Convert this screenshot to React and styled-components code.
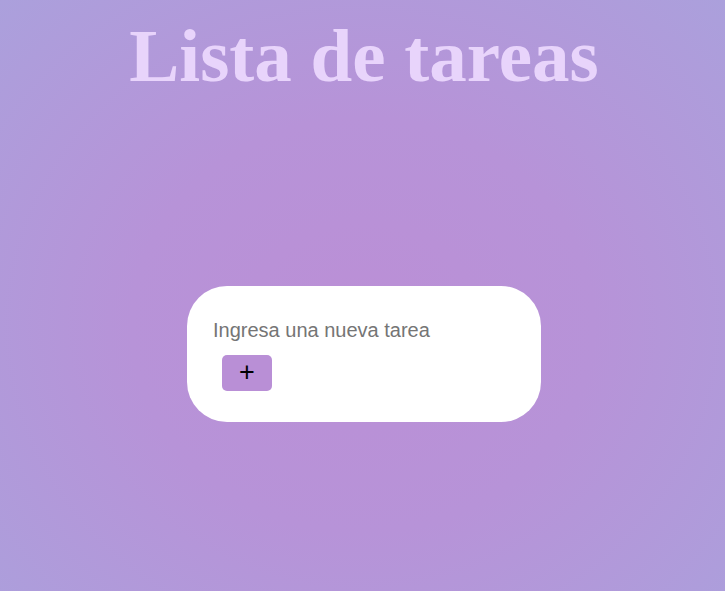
import React, { useState } from 'react'
import styled, { createGlobalStyle } from 'styled-components'

const GlobalStyle = createGlobalStyle`
  html, body {
    margin: 0;
    padding: 0;
    height: 100%;
  }
  body {
    font-family: "Liberation Sans", Arial, sans-serif;
  }
  #root {
    min-height: 100%;
  }
`

const Page = styled.div`
  min-height: 100vh;
  box-sizing: border-box;
  padding-left: 3px;
  display: flex;
  flex-direction: column;
  align-items: center;
  background: radial-gradient(ellipse at 50% 55%, #bb8fd6 0%, #b793d8 45%, #aba0dc 100%);
`

const Title = styled.h1`
  margin: 0;
  padding: 18px 0 21px;
  font-family: "Liberation Serif", "Times New Roman", serif;
  font-weight: 700;
  font-size: 75px;
  line-height: 1;
  color: #e8d4fb;
  text-align: center;
`

const Main = styled.main`
  flex: 1;
  padding-top: 2px;
  display: flex;
  align-items: center;
  justify-content: center;
`

const Card = styled.form`
  width: 354px;
  height: 136px;
  box-sizing: border-box;
  background: #ffffff;
  border-radius: 40px;
  padding: 29px 26px;
  display: flex;
  flex-direction: column;
  align-items: flex-start;
  gap: 8px;
`

const TaskInput = styled.input`
  border: none;
  outline: none;
  background: transparent;
  padding: 0;
  width: 100%;
  height: 32px;
  font-family: "Liberation Sans", Arial, sans-serif;
  font-size: 20px;
  color: #333;

  &::placeholder {
    color: #757575;
  }
`

const AddButton = styled.button`
  margin-left: 9px;
  width: 50px;
  height: 36px;
  border: none;
  border-radius: 5px;
  background: #b98fd6;
  color: #000;
  font-family: "Liberation Sans", Arial, sans-serif;
  font-size: 27px;
  line-height: 1;
  padding: 0;
  cursor: pointer;
`

const App = () => {
  const [task, setTask] = useState('')

  return (
    <Page>
      <GlobalStyle />
      <Title>Lista de tareas</Title>
      <Main>
        <Card onSubmit={(e) => { e.preventDefault(); setTask('') }}>
          <TaskInput
            value={task}
            onChange={(e) => setTask(e.target.value)}
            placeholder="Ingresa una nueva tarea"
          />
          <AddButton type="submit">+</AddButton>
        </Card>
      </Main>
    </Page>
  )
}

export default App
